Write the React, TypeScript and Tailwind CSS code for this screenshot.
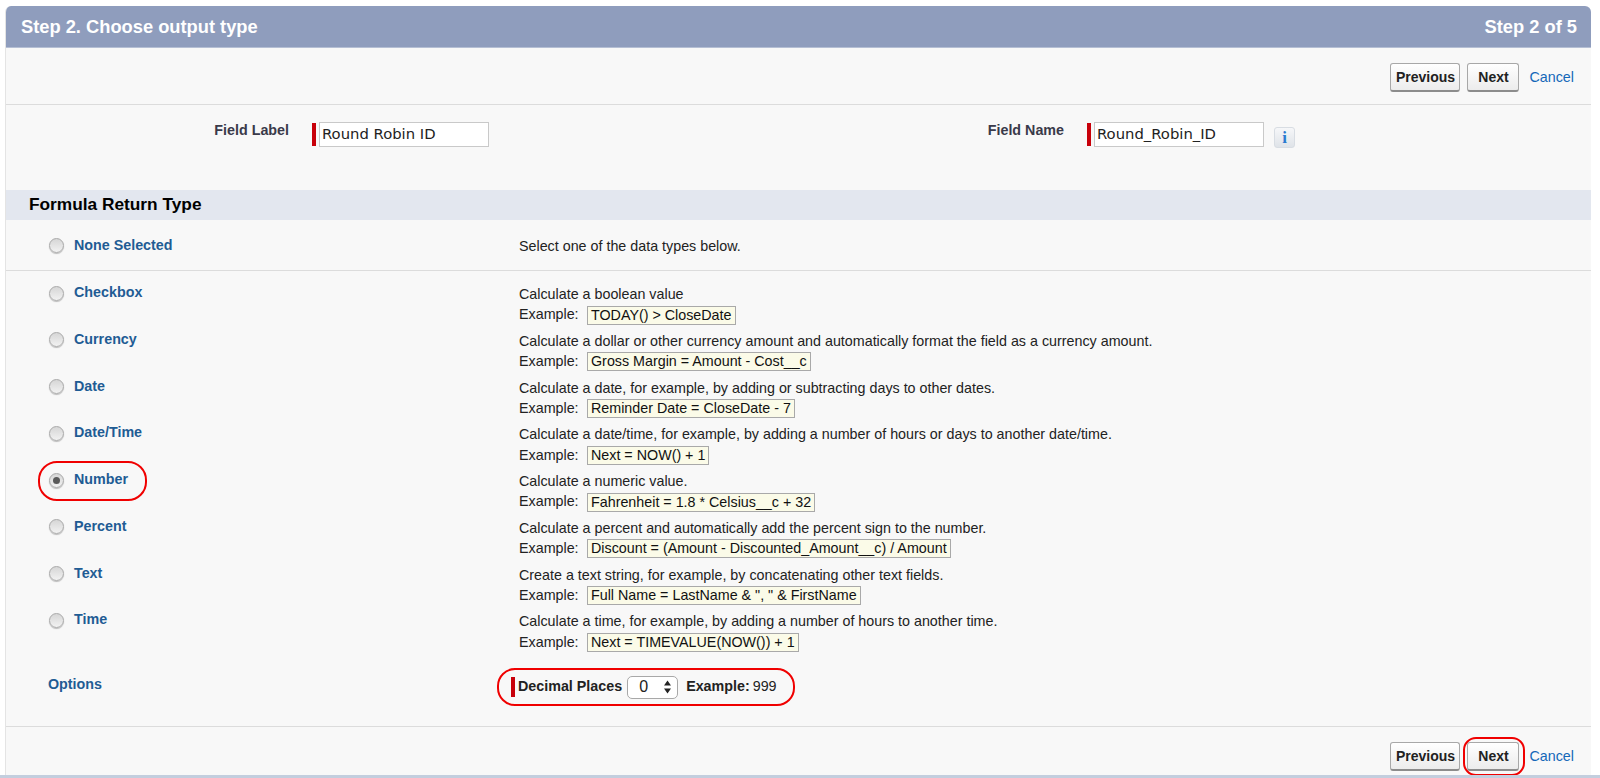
import React from 'react';

const types = [
  { name: 'Checkbox', desc: 'Calculate a boolean value', example: 'TODAY() > CloseDate' },
  { name: 'Currency', desc: 'Calculate a dollar or other currency amount and automatically format the field as a currency amount.', example: 'Gross Margin = Amount - Cost__c' },
  { name: 'Date', desc: 'Calculate a date, for example, by adding or subtracting days to other dates.', example: 'Reminder Date = CloseDate - 7' },
  { name: 'Date/Time', desc: 'Calculate a date/time, for example, by adding a number of hours or days to another date/time.', example: 'Next = NOW() + 1' },
  { name: 'Number', desc: 'Calculate a numeric value.', example: 'Fahrenheit = 1.8 * Celsius__c + 32', checked: true },
  { name: 'Percent', desc: 'Calculate a percent and automatically add the percent sign to the number.', example: 'Discount = (Amount - Discounted_Amount__c) / Amount' },
  { name: 'Text', desc: 'Create a text string, for example, by concatenating other text fields.', example: 'Full Name = LastName & ", " & FirstName' },
  { name: 'Time', desc: 'Calculate a time, for example, by adding a number of hours to another time.', example: 'Next = TIMEVALUE(NOW()) + 1' },
];

const Radio = ({ checked }: { checked?: boolean }) => (
  <span className="w-[15px] h-[15px] shrink-0 rounded-full border border-[#a9a9a9] bg-gradient-to-b from-[#d6d6d6] to-[#f2f2f2] shadow-[0_1px_1px_rgba(0,0,0,0.25)] flex items-center justify-center">
    {checked && <span className="w-[7px] h-[7px] rounded-full bg-[#5a5a5a]" />}
  </span>
);

const Button = ({ label, className }: { label: string; className: string }) => (
  <button className={`h-[29px] rounded-[3px] border border-[#a8a8a8] border-b-[2px] border-b-[#8c8c8c] bg-gradient-to-b from-[#ffffff] to-[#ececec] text-[14px] font-bold text-[#222] ${className}`}>
    {label}
  </button>
);

const Actions = ({ highlight }: { highlight?: boolean }) => (
  <div className="flex items-center justify-end pr-[17px]">
    <Button label="Previous" className="w-[70px]" />
    <span className="relative ml-[7px] flex">
      <Button label="Next" className="w-[52px]" />
      {highlight && <span className="absolute left-[-4px] right-[-6px] top-[-5px] bottom-[-5px] rounded-[13px] border-2 border-[#f00000]" />}
    </span>
    <a className="ml-[10px] text-[14.3px] text-[#1468b8]">Cancel</a>
  </div>
);

const Required = ({ className }: { className: string }) => <span className={`w-[4px] bg-[#c8000a] shrink-0 ${className}`} />;

const TextField = ({ value }: { value: string }) => (
  <div className="flex items-center gap-[3px]">
    <Required className="h-[23px]" />
    <div className="w-[170px] h-[25px] border border-[#c9c9c9] bg-white pl-[2px] flex items-center font-['DejaVu_Sans'] text-[14.8px] text-[#222]">
      {value}
    </div>
  </div>
);

export default function App() {
  return (
    <div className="h-[778px] overflow-hidden bg-white pt-[6px] font-['Liberation_Sans',Arial,sans-serif] text-[14.3px] text-[#222]">
      <div className="h-[769px] ml-[5px] mr-[9px] flex flex-col bg-[#f8f8f8] border-l border-[#e4e4e4] overflow-hidden rounded-t-[6px]">
        <div className="h-[42px] shrink-0 bg-[#8f9dbd] border-b border-[#b5bfd4] flex items-center justify-between pl-[15px] pr-[14px] text-white font-bold text-[18.3px]">
          <span>Step 2. Choose output type</span>
          <span>Step 2 of 5</span>
        </div>

        <div className="h-[57px] shrink-0 border-b border-[#dcdcdc] pt-[15px]">
          <Actions />
        </div>

        <div className="h-[85px] shrink-0 flex items-start pt-[17px]">
          <div className="w-[283px] -mt-[2px] text-right font-bold text-[#3a3a4a]">Field Label</div>
          <div className="ml-[23px]"><TextField value="Round Robin ID" /></div>
          <div className="w-[575px] -mt-[2px] text-right font-bold text-[#3a3a4a]">Field Name</div>
          <div className="ml-[23px]"><TextField value="Round_Robin_ID" /></div>
          <span className="ml-[10px] mt-[5px] w-[21px] h-[21px] rounded-[3px] border border-[#d8dde3] bg-gradient-to-b from-[#f6f7f9] to-[#dfe3e8] flex items-center justify-center font-['Liberation_Serif'] font-bold text-[17px] text-[#2a7bd0]">i</span>
        </div>

        <div className="h-[30px] shrink-0 bg-[#e3e7ef] flex items-center pl-[23px] font-bold text-[17.3px] text-black">
          Formula Return Type
        </div>

        <div className="h-[51px] shrink-0 border-b border-[#dcdcdc] flex">
          <div className="w-[513px] shrink-0 pl-[43px] flex items-center gap-[10px]">
            <Radio />
            <span className="font-bold text-[#1f5c94] mt-[2px]">None Selected</span>
          </div>
          <div className="flex items-center pt-[3px]">Select one of the data types below.</div>
        </div>

        <div className="pt-[14px]">
          {types.map(t => (
            <div key={t.name} className="h-[46.75px] flex">
              <div className="w-[513px] shrink-0 pl-[43px] flex items-start gap-[10px]">
                <span className="relative -mt-[2px] flex items-center gap-[10px]">
                  <Radio checked={t.checked} />
                  <span className="font-bold text-[#1f5c94] -mt-[1px]">{t.name}</span>
                  {t.checked && <span className="absolute left-[-11px] right-[-19px] top-[-9px] bottom-[-11px] rounded-[19px] border-2 border-[#f00000]" />}
                </span>
              </div>
              <div>
                <div className="h-[18px] leading-[18px]">{t.desc}</div>
                <div className="flex items-center h-[20px] mt-[2px]">
                  <span className="w-[68px]">Example:</span>
                  <span className="h-[19px] leading-[17px] px-[3px] border border-[#a9a9a9] bg-[#fbfbe8] text-[#111]">{t.example}</span>
                </div>
              </div>
            </div>
          ))}
        </div>

        <div className="h-[68px] shrink-0 flex border-b border-[#dcdcdc]">
          <div className="w-[513px] shrink-0 pl-[42px] pt-[15px] font-bold text-[#1f5c94]">Options</div>
          <div className="relative h-[38px] flex items-center self-start mt-[9px] -ml-[8px]">
            <Required className="h-[20px]" />
            <span className="ml-[3px] font-bold">Decimal Places</span>
            <span className="ml-[5px] w-[51px] h-[23px] rounded-[5px] border border-[#a8a8a8] bg-white flex items-center justify-between pl-[11px] pr-[5px] text-[16px]">
              0
              <svg width="9" height="14" viewBox="0 0 9 14" fill="#222"><path d="M4.5 0.5 8 5.5H1zM4.5 13.5 1 8.5h7z" /></svg>
            </span>
            <span className="ml-[8px] font-bold">Example:</span>
            <span className="ml-[3px]">999</span>
            <span className="absolute left-[-14px] right-[-18px] top-0 bottom-0 rounded-[18px] border-2 border-[#f00000]" />
          </div>
        </div>

        <div className="pt-[15px]">
          <Actions highlight />
        </div>
      </div>
      <div className="h-[3px] bg-[#c3cede]" />
    </div>
  );
}
